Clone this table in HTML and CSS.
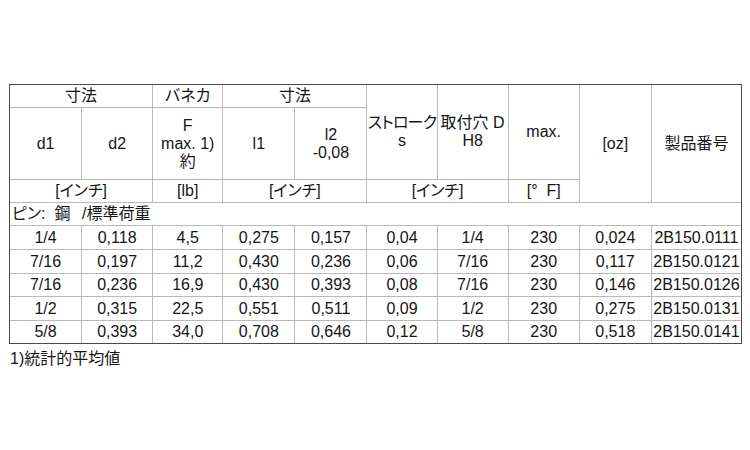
FILE: index.html
```html
<!DOCTYPE html>
<html lang="ja">
<head>
<meta charset="utf-8">
<link rel="stylesheet" href="styles.css">
</head>
<body>
<div class="page">
<table class="spec">
  <colgroup>
    <col class="c73"><col class="c71"><col class="c70"><col class="c72"><col class="c72">
    <col class="c70"><col class="c71"><col class="c71"><col class="c72"><col class="c90">
  </colgroup>
  <tr class="h1">
    <td colspan="2">寸法</td>
    <td>バネカ</td>
    <td colspan="2">寸法</td>
    <td rowspan="2"><span class="tight">ストローク</span><br>s</td>
    <td rowspan="2">取付穴 D<br>H8</td>
    <td rowspan="2">max.</td>
    <td rowspan="3">[oz]</td>
    <td rowspan="3" class="last">製品番号</td>
  </tr>
  <tr class="h2">
    <td>d1</td>
    <td>d2</td>
    <td>F<br>max. 1)<br>約</td>
    <td>l1</td>
    <td>l2<br>-0,08</td>
  </tr>
  <tr class="h3">
    <td colspan="2">[インチ]</td>
    <td>[lb]</td>
    <td colspan="2">[インチ]</td>
    <td colspan="2">[インチ]</td>
    <td>[°&nbsp;&nbsp;F]</td>
  </tr>
  <tr class="group">
    <td colspan="10" class="last"><span class="mat">ピン:&nbsp; 鋼</span>/標準荷重</td>
  </tr>
  <tr class="r1"><td>1/4</td><td>0,118</td><td>4,5</td><td>0,275</td><td>0,157</td><td>0,04</td><td>1/4</td><td>230</td><td>0,024</td><td class="last">2B150.0111</td></tr>
  <tr class="r2"><td>7/16</td><td>0,197</td><td>11,2</td><td>0,430</td><td>0,236</td><td>0,06</td><td>7/16</td><td>230</td><td>0,117</td><td class="last">2B150.0121</td></tr>
  <tr class="r3"><td>7/16</td><td>0,236</td><td>16,9</td><td>0,430</td><td>0,393</td><td>0,08</td><td>7/16</td><td>230</td><td>0,146</td><td class="last">2B150.0126</td></tr>
  <tr class="r4"><td>1/2</td><td>0,315</td><td>22,5</td><td>0,551</td><td>0,511</td><td>0,09</td><td>1/2</td><td>230</td><td>0,275</td><td class="last">2B150.0131</td></tr>
  <tr class="r5 end"><td>5/8</td><td>0,393</td><td>34,0</td><td>0,708</td><td>0,646</td><td>0,12</td><td>5/8</td><td>230</td><td>0,518</td><td class="last">2B150.0141</td></tr>
</table>
<p class="note">1)統計的平均値</p>
</div>
</body>
</html>
```

FILE: styles.css
```css
html, body {
  margin: 0;
  padding: 0;
  background: #ffffff;
}

.page {
  padding: 84px 0 0 9px;
  font-family: "Liberation Sans", "Noto Sans CJK JP", sans-serif;
  font-size: 16px;
  color: #151515;
  font-feature-settings: "palt";
}

.spec {
  border-collapse: separate;
  border-spacing: 0;
  table-layout: fixed;
  width: 733px;
  border: 1px solid #4a4a4a;
}

.c70 { width: 70px; }
.c71 { width: 71px; }
.c72 { width: 72px; }
.c73 { width: 72px; }
.c90 { width: 89px; }

.spec td {
  padding: 0;
  text-align: center;
  vertical-align: middle;
  line-height: 18px;
  border-right: 1px solid #b9b9b9;
  border-bottom: 1px solid #b9b9b9;
  white-space: nowrap;
  overflow: visible;
}

.spec td.last {
  border-right: none;
}

.spec tr.end td {
  border-bottom: none;
}

.h1 { height: 23px; }
.h2 { height: 72px; }
.h3 { height: 23px; }
.group { height: 23px; }
.r1, .r2, .r4 { height: 24px; }
.r3 { height: 23px; }
.r5 { height: 22px; }

.tight {
  letter-spacing: -0.8px;
}

.spec tr.group td {
  text-align: left;
  padding-left: 2px;
}

.mat {
  display: inline-block;
  width: 70px;
}

.note {
  margin: 6px 0 0 1px;
  line-height: 18px;
}
```
